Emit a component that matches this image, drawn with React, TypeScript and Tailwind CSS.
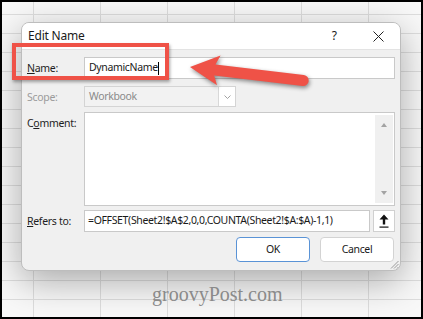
import React from "react";

const ui = { fontFamily: '"Noto Sans", "Open Sans", sans-serif' };

const Label = ({ children, muted }: { children: React.ReactNode; muted?: boolean }) => (
  <div className={`pt-[4px] text-[10.5px] leading-[14px] tracking-[-0.3px] ${muted ? "text-[#9b9b9b]" : "text-[#1e1e1e]"}`}>{children}</div>
);

const RedArrow = () => (
  <svg
    className="absolute left-[180px] top-[42px] drop-shadow-[1px_2px_2px_rgba(0,0,0,0.45)]"
    width="140"
    height="52"
    viewBox="0 0 140 52"
  >
    <g transform="translate(8 23) rotate(6.8)">
      <path
        d="M0 0 L29 -15 L25 -5.5 L114 -5.5 A5.5 5.5 0 0 1 114 5.5 L25 5.5 L29 15 Z"
        fill="#ef5247"
      />
    </g>
  </svg>
);

export default function App() {
  return (
    <div
      style={ui}
      className="relative w-[423px] h-[319px] overflow-hidden border-2 border-black bg-[#f8f8f8] bg-[linear-gradient(to_right,#dddddd_1px,transparent_1px),linear-gradient(#dddddd_1px,transparent_1px)] bg-[size:67px_19px] bg-[position:31px_12px]"
    >
      <div className="pt-[20px] pl-[19px]">
        <div className="w-[380px] h-[249px] flex flex-col rounded-[8px] border border-[#bdbdbd] bg-[#f0f0f0] shadow-[0_10px_36px_rgba(0,0,0,0.32)] overflow-hidden">
          {/* title bar */}
          <div className="h-[27px] shrink-0 flex items-center bg-white border-b border-[#e3e3e3] pl-[6px] pr-[16px]">
            <span className="text-[12px] tracking-[-0.2px] text-[#1a1a1a]">Edit Name</span>
            <span className="ml-auto mr-[36px] text-[12px] text-[#1a1a1a]">?</span>
            <svg width="11" height="11" viewBox="0 0 11 11">
              <path d="M0.5 0.5 L10.5 10.5 M10.5 0.5 L0.5 10.5" stroke="#222" strokeWidth="1" />
            </svg>
          </div>

          {/* body */}
          <div className="flex flex-col px-[5px] pt-[7px] text-[10.5px] tracking-[-0.35px]">
            <div className="grid grid-cols-[57px_1fr]">
              <Label>
                <span className="underline">N</span>ame:
              </Label>
              <div className="h-[22px] flex items-center bg-white border border-[#c9c9c9] pl-[4px] text-[#1a1a1a]">
                DynamicName<span className="w-px h-[13px] bg-black" />
              </div>
            </div>

            <div className="grid grid-cols-[57px_1fr] mt-[7px]">
              <Label muted>Scope:</Label>
              <div className="h-[21px] w-[152px] flex border border-[#d4d4d4] bg-[#f2f2f2]">
                <div className="flex-1 flex items-center pl-[4px] text-[#8a8a8a]">Workbook</div>
                <div className="w-[17px] flex items-center justify-center bg-white border-l border-[#d8d8d8]">
                  <svg width="7" height="4" viewBox="0 0 7 4">
                    <path d="M0.5 0.5 L3.5 3.5 L6.5 0.5" fill="none" stroke="#8a8a8a" strokeWidth="0.8" />
                  </svg>
                </div>
              </div>
            </div>

            <div className="grid grid-cols-[57px_1fr] mt-[5px]">
              <Label>
                C<span className="underline">o</span>mment:
              </Label>
              <div className="h-[94px] flex bg-white border border-[#c9c9c9]">
                <div className="flex-1" />
                <div className="w-[18px] my-[2px] mr-[1px] flex flex-col items-center justify-between py-[8px] bg-[#f0f0f0]">
                  <svg width="6" height="4" viewBox="0 0 6 4">
                    <path d="M3 0 L6 4 L0 4 Z" fill="#a3a3a3" />
                  </svg>
                  <svg width="6" height="4" viewBox="0 0 6 4">
                    <path d="M0 0 L6 0 L3 4 Z" fill="#a3a3a3" />
                  </svg>
                </div>
              </div>
            </div>

            <div className="grid grid-cols-[57px_1fr] mt-[4px]">
              <Label>
                <span className="underline">R</span>efers to:
              </Label>
              <div className="h-[22px] flex gap-[3px]">
                <div className="flex-1 flex items-center bg-white border border-[#c9c9c9] pl-[3px] text-[#1a1a1a] whitespace-nowrap overflow-hidden">
                  =OFFSET(Sheet2!$A$2,0,0,COUNTA(Sheet2!$A:$A)-1,1)
                </div>
                <div className="w-[22px] flex items-center justify-center bg-white border border-[#d0d0d0]">
                  <svg width="10" height="14" viewBox="0 0 10 14">
                    <path d="M5 0.5 L9.5 5.5 L6.2 5.5 L6.2 10.5 L3.8 10.5 L3.8 5.5 L0.5 5.5 Z" fill="#111" />
                    <rect x="0.5" y="12.5" width="9" height="1.2" fill="#111" />
                  </svg>
                </div>
              </div>
            </div>

            <div className="flex justify-end gap-[10px] mt-[5px] pr-px">
              <div className="w-[74px] h-[25px] flex items-center justify-center rounded-[4px] bg-white border border-[#5a93d6] text-[#1a1a1a]">
                OK
              </div>
              <div className="w-[74px] h-[25px] flex items-center justify-center rounded-[4px] bg-white border border-[#d3d3d3] text-[#1a1a1a]">
                Cancel
              </div>
            </div>
          </div>

          <div className="relative flex-1">
            <svg className="absolute right-[1px] bottom-[1px]" width="9" height="9" viewBox="0 0 9 9">
              <path d="M8.5 1 L1 8.5 M8.5 4 L4 8.5 M8.5 7 L7 8.5" stroke="#9a9a9a" strokeWidth="1" />
            </svg>
          </div>
        </div>
      </div>

      {/* highlight box around Name */}
      <div className="absolute left-[10px] top-[41px] w-[157px] h-[37px] border-[4px] border-[#ef5247] shadow-[1px_2px_3px_rgba(0,0,0,0.35)]" />
      <RedArrow />

      <div
        className="absolute left-[150px] top-[282px] text-[20px] leading-[20px] text-[#8a8a8a]"
        style={{ fontFamily: '"Liberation Serif", "DejaVu Serif", serif' }}
      >
        groovyPost.com
      </div>
    </div>
  );
}
